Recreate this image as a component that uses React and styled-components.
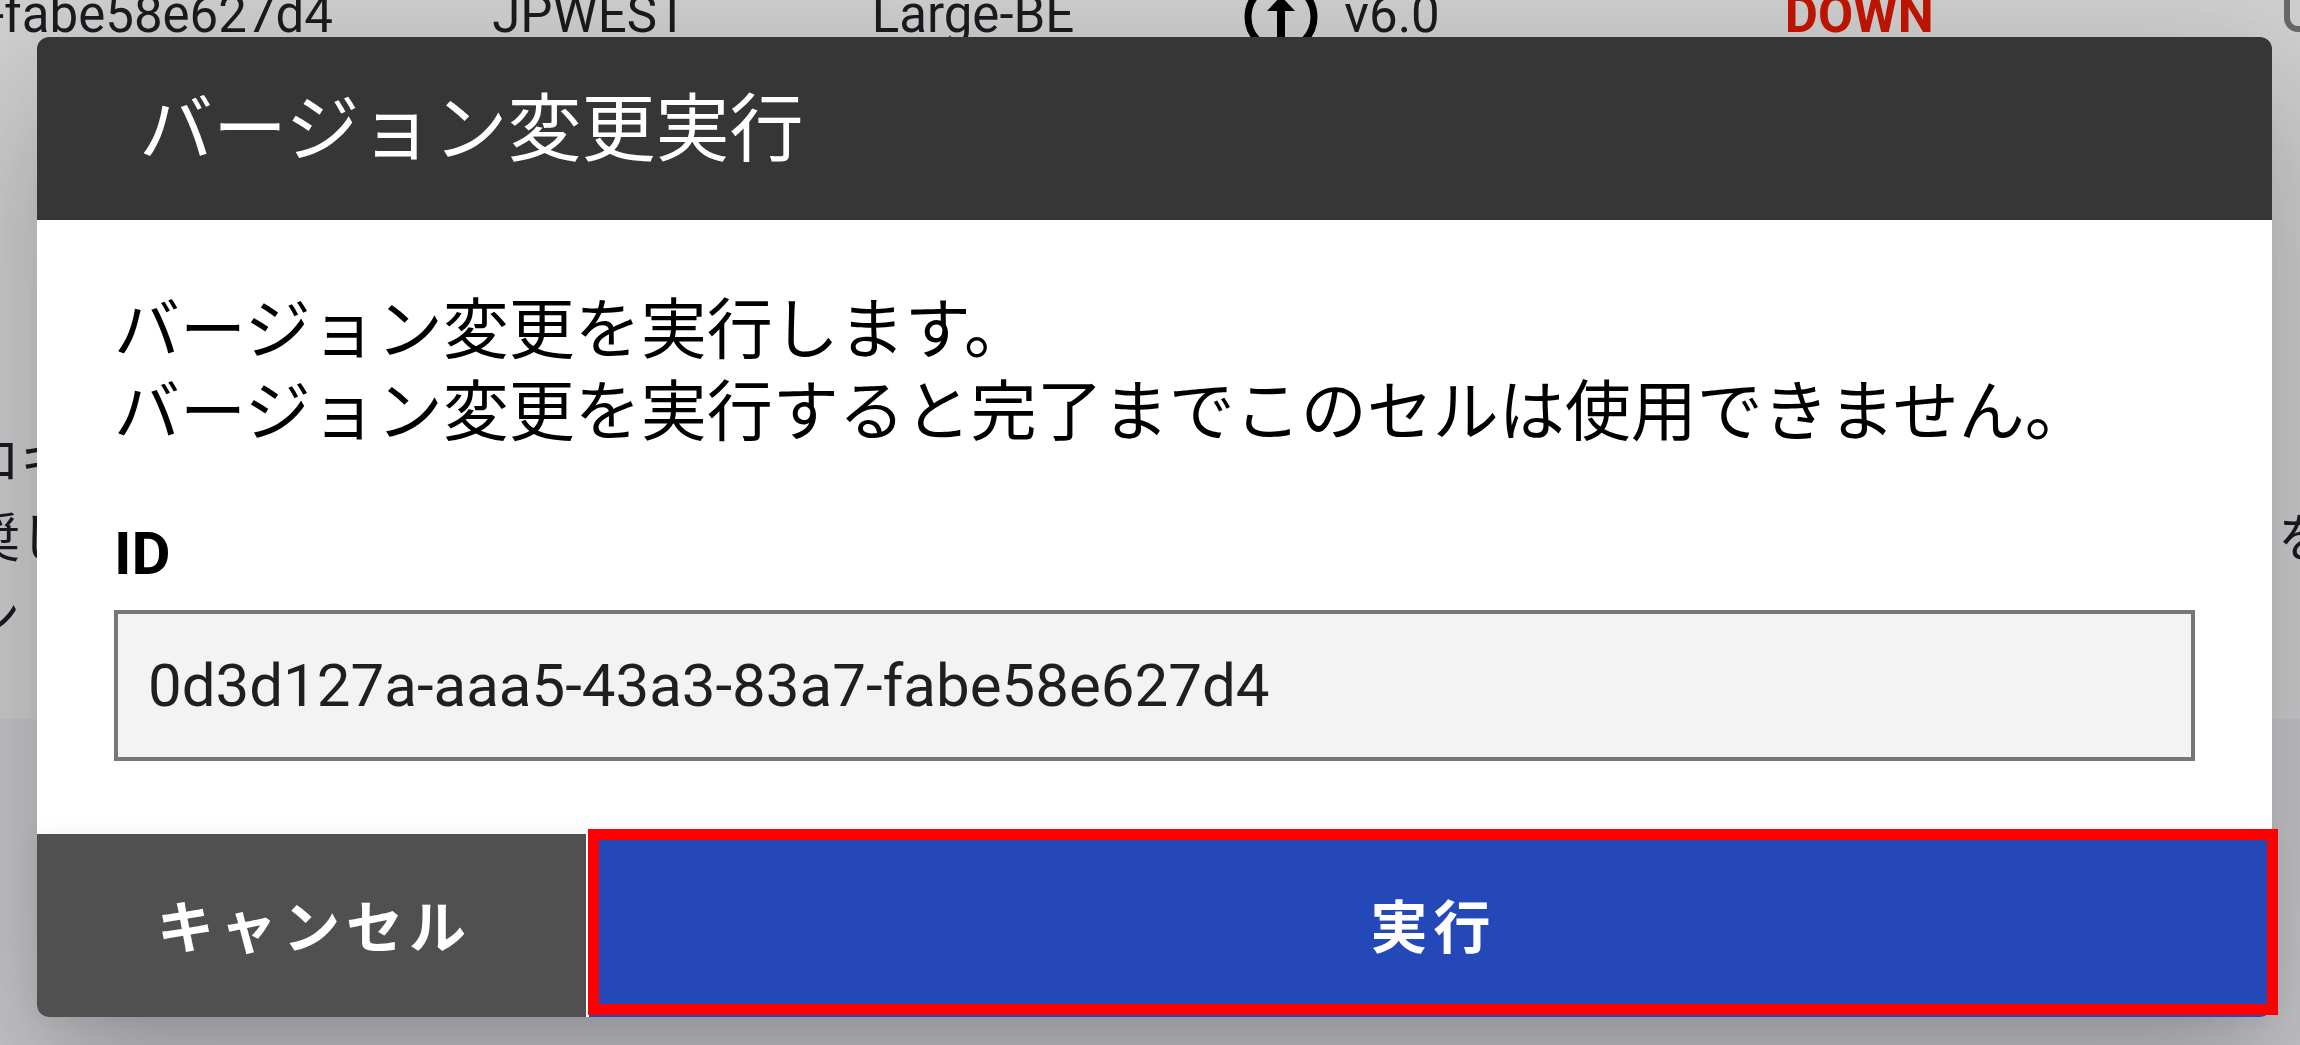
import React from "react";
import styled, { createGlobalStyle } from "styled-components";

const cell = {
  id: "0d3d127a-aaa5-43a3-83a7-fabe58e627d4",
  shortId: "-fabe58e627d4",
  region: "JPWEST",
  size: "Large-BE",
  version: "v6.0",
  status: "DOWN",
};

const UpIcon = () => (
  <svg width="74" height="74" viewBox="0 0 74 74" aria-hidden="true">
    <circle cx="37" cy="39" r="33" fill="none" stroke="#000" strokeWidth="7" />
    <path d="M37 18 L51 33 H41 V62 H33 V33 H23 Z" fill="#000" />
  </svg>
);

const CellList = () => (
  <Panel>
    <CellTable>
      <colgroup>
        <Col $width="21.4%" />
        <Col $width="16.5%" />
        <Col $width="16.2%" />
        <Col $width="23.5%" />
        <Col $width="21.7%" />
        <Col />
      </colgroup>
      <tbody>
        <tr>
          <td>{cell.shortId}</td>
          <td>{cell.region}</td>
          <td>{cell.size}</td>
          <td>
            <Version>
              <UpIcon />
              {cell.version}
            </Version>
          </td>
          <Status>{cell.status}</Status>
          <td>
            <RowButton type="button" aria-label="操作" />
          </td>
        </tr>
      </tbody>
    </CellTable>
    <Notice>
      <NoticeLine>
        <span>ロキ</span>
      </NoticeLine>
      <NoticeLine>
        <span>奨し</span>
        <span>を</span>
      </NoticeLine>
      <NoticeLine>
        <span>ン</span>
      </NoticeLine>
    </Notice>
  </Panel>
);

const VersionDialog = () => (
  <Dialog role="dialog" aria-modal="true" aria-labelledby="dialog-title">
    <DialogHead>
      <DialogTitle id="dialog-title">バージョン変更実行</DialogTitle>
    </DialogHead>
    <DialogBody>
      <Message>
        バージョン変更を実行します。
        <br />
        バージョン変更を実行すると完了までこのセルは使用できません。
      </Message>
      <Label htmlFor="cell-id">ID</Label>
      <IdInput id="cell-id" type="text" value={cell.id} readOnly />
    </DialogBody>
    <DialogFoot>
      <CancelButton type="button">キャンセル</CancelButton>
      <RunBox>
        <RunButton type="button">実行</RunButton>
      </RunBox>
    </DialogFoot>
  </Dialog>
);

const App = () => {
  return (
    <React.Fragment>
      <GlobalStyle />
      <Page>
        <CellList />
      </Page>
      <Backdrop>
        <VersionDialog />
      </Backdrop>
    </React.Fragment>
  );
};

const GlobalStyle = createGlobalStyle`
  * {
    box-sizing: border-box;
  }

  body {
    margin: 0;
    overflow: hidden;
    font-family: Roboto, "Noto Sans CJK JP", sans-serif;
    color: #1f2226;
  }
`;

const Page = styled.div`
  width: 100%;
  min-height: 100vh;
  overflow: hidden;
  background-color: #f6f6f9;
`;

const Panel = styled.div`
  padding-bottom: 62px;
  background-color: #fff;
`;

const CellTable = styled.table`
  width: 100%;
  table-layout: fixed;
  border-collapse: collapse;
  font-size: 51px;
  line-height: 30px;
  white-space: nowrap;

  td {
    height: 32px;
    padding: 0;
    vertical-align: top;
  }

  td:first-child {
    text-indent: -10px;
  }
`;

const Col = styled.col`
  width: ${(props) => props.$width || "auto"};
`;

const Version = styled.div`
  height: 30px;
  display: flex;
  align-items: center;
  gap: 26px;
`;

const Status = styled.td`
  color: #f01a00;
  font-weight: 700;
`;

const RowButton = styled.button`
  width: 120px;
  height: 32px;
  display: block;
  border: 6px solid #808080;
  border-top: none;
  border-radius: 0 0 14px 14px;
  background-color: #fff;
`;

const Notice = styled.div`
  margin: 391px -30px 0 -32px;
  font-size: 52px;
`;

const NoticeLine = styled.div`
  display: flex;
  justify-content: space-between;
  line-height: 78px;
`;

const Backdrop = styled.div`
  position: fixed;
  inset: 0;
  padding: 37px 28px 28px 37px;
  background-color: rgba(0, 0, 0, 0.18);
`;

const Dialog = styled.section`
  width: 100%;
  display: flex;
  flex-direction: column;
  border-radius: 12px;
  background-color: #fff;
  color: #000;
  box-shadow: 0 41px 56px -26px rgba(10, 10, 30, 0.06),
    0 90px 143px 11px rgba(10, 10, 30, 0.14),
    0 34px 173px 30px rgba(10, 10, 30, 0.12);
`;

const DialogHead = styled.header`
  height: 183px;
  padding: 2px 102px 0;
  display: flex;
  align-items: center;
  border-radius: 12px 12px 0 0;
  background-color: #363636;
`;

const DialogTitle = styled.h1`
  margin: 0;
  font-size: 74px;
  font-weight: 400;
  line-height: 84px;
  color: #fff;
`;

const DialogBody = styled.div`
  padding: 70px 77px 73px;
  display: flex;
  flex-direction: column;
`;

const Message = styled.p`
  margin: 0;
  font-size: 66px;
  font-weight: 400;
  line-height: 82px;
`;

const Label = styled.label`
  margin: 66px 0 22px;
  font-size: 60px;
  font-weight: 700;
  line-height: 68px;
`;

const IdInput = styled.input`
  width: 100%;
  height: 151px;
  padding: 0 30px;
  border: 4px solid #777;
  border-radius: 0;
  background-color: #f3f3f3;
  font-family: inherit;
  font-size: 60px;
  color: #1f1f1f;
  outline: none;
`;

const DialogFoot = styled.footer`
  height: 183px;
  display: flex;
  gap: 3px;
  border-radius: 0 0 12px 12px;
  box-shadow: 0 0 24px rgba(0, 0, 0, 0.06);
`;

const FootButton = styled.button`
  padding: 0 0 6px 6px;
  border: none;
  font-family: inherit;
  font-size: 57px;
  font-weight: 700;
  letter-spacing: 6px;
  color: #fff;
`;

const CancelButton = styled(FootButton)`
  width: 549px;
  border-radius: 0 0 0 12px;
  background-color: #505050;
`;

const RunBox = styled.div`
  flex: 1;
  display: flex;
  position: relative;

  /* red frame that marks the button to press */
  &::after {
    content: "";
    position: absolute;
    inset: -5px -6px 2px -1px;
    border: 11px solid #f00;
    pointer-events: none;
  }
`;

const RunButton = styled(FootButton)`
  flex: 1;
  border-radius: 0 0 12px 0;
  background-color: #2448b8;
`;

export default App;
